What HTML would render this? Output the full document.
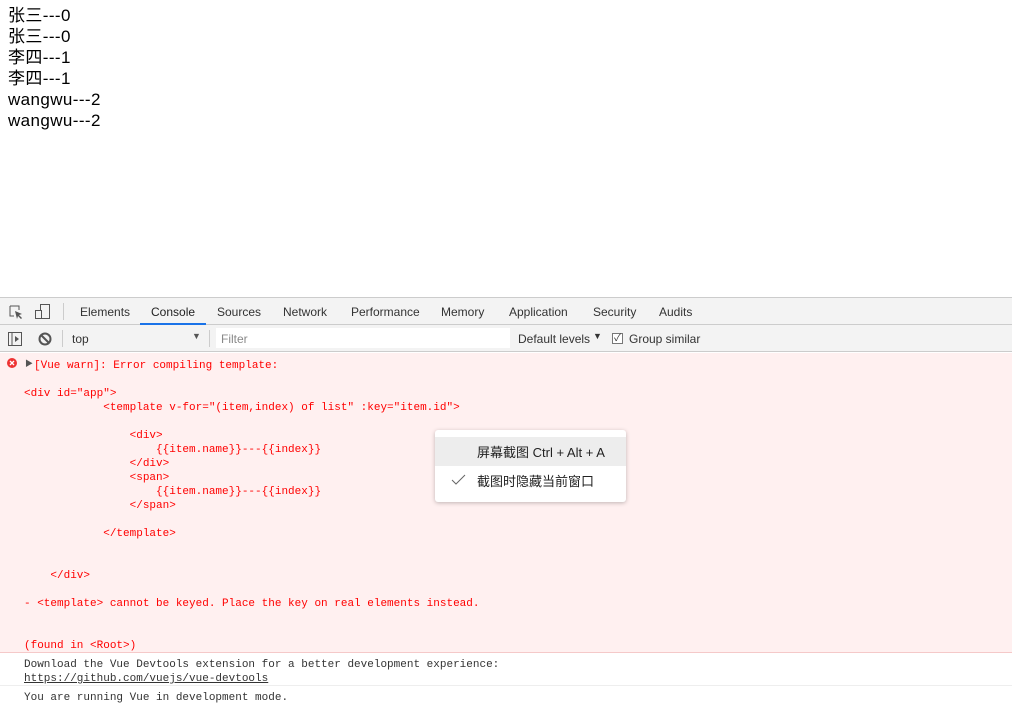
<!DOCTYPE html>
<html><head><meta charset="utf-8"><style>
*{margin:0;padding:0;box-sizing:border-box}
body{width:1012px;height:705px;overflow:hidden;background:#fff;font-family:"Liberation Sans","Noto Sans CJK SC",sans-serif;position:relative}
.top{position:absolute;left:8px;top:5px;font-size:17px;letter-spacing:0.4px;line-height:21px;color:#000}
.dt{position:absolute;left:0;top:297px;width:1012px;height:408px;background:#fff}
.tabs{height:28px;background:#f3f3f3;border-top:1px solid #ccc;border-bottom:1px solid #ccc;position:relative;font-size:12px;color:#333}
.tabs span{position:absolute;top:7px}
.tb2{height:27px;background:#f3f3f3;border-bottom:1px solid #ccc;position:relative;font-size:12px;color:#333}
.mono{font-family:"Liberation Mono",monospace;font-size:11px;line-height:14px;white-space:pre}
.err{position:absolute;left:0;top:56px;width:1012px;height:300px;background:#fff0f0;border-bottom:1px solid #f5c9c9;color:#f00}
.menu{position:absolute;left:435px;top:430px;width:191px;height:72px;background:#fff;border-radius:3px;box-shadow:0 1px 4px rgba(0,0,0,.25);font-size:13px;color:#222}
</style></head><body>
<div class="top">张三---0<br>张三---0<br>李四---1<br>李四---1<br>wangwu---2<br>wangwu---2</div>
<div class="dt">
<div class="tabs">
<svg style="position:absolute;left:9px;top:7px" width="14" height="15"><path d="M1 1h9v4M1 1v10h4" stroke="#555" fill="none"/><path d="M6 6l7 3-3 1 3 3-1 1-3-3-1 3z" fill="#555"/></svg>
<svg style="position:absolute;left:35px;top:6px" width="16" height="16"><rect x="5.5" y="0.5" width="9" height="14" stroke="#555" fill="none"/><rect x="0.5" y="6.5" width="6" height="8" stroke="#555" fill="#f3f3f3"/></svg>
<div style="position:absolute;left:63px;top:5px;width:1px;height:17px;background:#ccc"></div>
<span style="left:80px">Elements</span><span style="left:151px;color:#222">Console</span><span style="left:217px">Sources</span><span style="left:283px">Network</span><span style="left:351px">Performance</span><span style="left:441px">Memory</span><span style="left:509px">Application</span><span style="left:593px">Security</span><span style="left:659px">Audits</span>
<div style="position:absolute;left:140px;top:25px;width:66px;height:2px;background:#1a73e8"></div>
</div>
<div class="tb2">
<svg style="position:absolute;left:8px;top:7px" width="14" height="14"><rect x="0.5" y="0.5" width="13" height="13" stroke="#555" fill="none"/><path d="M4 1v12" stroke="#555"/><path d="M7 4l4 3-4 3z" fill="#555"/></svg>
<svg style="position:absolute;left:38px;top:7px" width="14" height="14"><circle cx="7" cy="7" r="5.5" stroke="#555" stroke-width="2" fill="none"/><path d="M3 3l8 8" stroke="#555" stroke-width="2"/></svg>
<div style="position:absolute;left:62px;top:5px;width:1px;height:17px;background:#ccc"></div>
<span style="position:absolute;left:72px;top:7px">top</span>
<span style="position:absolute;left:192px;top:6px;font-size:9px;color:#555">▼</span>
<div style="position:absolute;left:209px;top:5px;width:1px;height:17px;background:#ccc"></div>
<div style="position:absolute;left:216px;top:3px;width:294px;height:20px;background:#fff"><span style="position:absolute;left:5px;top:4px;color:#888">Filter</span></div>
<span style="position:absolute;left:518px;top:7px">Default levels</span><span style="position:absolute;left:593px;top:6px;font-size:9px">▼</span>
<div style="position:absolute;left:612px;top:8px;width:11px;height:11px;border:1px solid #777;background:#fff;font-size:10px;line-height:9px;text-align:center">✓</div>
<span style="position:absolute;left:629px;top:7px">Group similar</span>
</div>
<div class="err">
<svg style="position:absolute;left:7px;top:5px" width="10" height="10"><circle cx="5" cy="5" r="5" fill="#e33"/><path d="M3 3l4 4M7 3l-4 4" stroke="#fff" stroke-width="1.3"/></svg>
<span style="position:absolute;left:25px;top:5px;font-size:8px;color:#555">▶</span>
<div class="mono" style="position:absolute;left:34px;top:6px">[Vue warn]: Error compiling template:</div>
<div class="mono" style="position:absolute;left:24px;top:34px">&lt;div id="app"&gt;
            &lt;template v-for="(item,index) of list" :key="item.id"&gt;

                &lt;div&gt;
                    {{item.name}}---{{index}}
                &lt;/div&gt;
                &lt;span&gt;
                    {{item.name}}---{{index}}
                &lt;/span&gt;

            &lt;/template&gt;


    &lt;/div&gt;

- &lt;template&gt; cannot be keyed. Place the key on real elements instead.


(found in &lt;Root&gt;)</div>
</div>
<div class="mono" style="position:absolute;left:24px;top:361px;color:#333">Download the Vue Devtools extension for a better development experience:
<u>https://github.com/vuejs/vue-devtools</u></div>
<div style="position:absolute;left:0;top:388px;width:1012px;height:1px;background:#eee"></div>
<div class="mono" style="position:absolute;left:24px;top:394px;color:#333">You are running Vue in development mode.</div>
</div>
<div class="menu">
<div style="position:absolute;left:0;top:7px;width:191px;height:29px;background:#ededed"></div>
<span style="position:absolute;left:42px;top:12px">屏幕截图 Ctrl + Alt + A</span>
<svg style="position:absolute;left:16px;top:44px" width="16" height="12"><path d="M1 6l4 4 9-9" stroke="#666" fill="none"/></svg>
<span style="position:absolute;left:42px;top:41px">截图时隐藏当前窗口</span>
</div>
</body></html>
